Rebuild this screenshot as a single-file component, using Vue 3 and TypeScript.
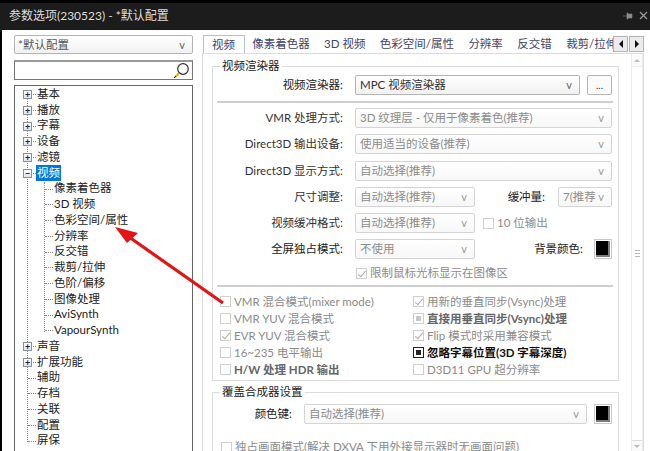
<script setup lang="ts">
interface TreeNode {
  label: string
  level: 1 | 2
  toggle?: '+' | '-'
  selected?: boolean
}

interface Option {
  label: string
  state?: 'checked' | 'mixed' | 'dark'
  bold?: boolean
}

const tree: TreeNode[] = [
  { label: '基本', level: 1, toggle: '+' },
  { label: '播放', level: 1, toggle: '+' },
  { label: '字幕', level: 1, toggle: '+' },
  { label: '设备', level: 1, toggle: '+' },
  { label: '滤镜', level: 1, toggle: '+' },
  { label: '视频', level: 1, toggle: '-', selected: true },
  { label: '像素着色器', level: 2 },
  { label: '3D 视频', level: 2 },
  { label: '色彩空间/属性', level: 2 },
  { label: '分辨率', level: 2 },
  { label: '反交错', level: 2 },
  { label: '裁剪/拉伸', level: 2 },
  { label: '色阶/偏移', level: 2 },
  { label: '图像处理', level: 2 },
  { label: 'AviSynth', level: 2 },
  { label: 'VapourSynth', level: 2 },
  { label: '声音', level: 1, toggle: '+' },
  { label: '扩展功能', level: 1, toggle: '+' },
  { label: '辅助', level: 1 },
  { label: '存档', level: 1 },
  { label: '关联', level: 1 },
  { label: '配置', level: 1 },
  { label: '屏保', level: 1 },
]

const tabs = ['视频', '像素着色器', '3D 视频', '色彩空间/属性', '分辨率', '反交错', '裁剪/拉伸']

const options: Option[] = [
  { label: 'VMR 混合模式(mixer mode)' },
  { label: '用新的垂直同步(Vsync)处理', state: 'checked' },
  { label: 'VMR YUV 混合模式' },
  { label: '直接用垂直同步(Vsync)处理', state: 'mixed', bold: true },
  { label: 'EVR YUV 混合模式', state: 'checked' },
  { label: 'Flip 模式时采用兼容模式', state: 'checked' },
  { label: '16~235 电平输出' },
  { label: '忽略字幕位置(3D 字幕深度)', state: 'dark', bold: true },
  { label: 'H/W 处理 HDR 输出', bold: true },
  { label: 'D3D11 GPU 超分辨率' },
]
</script>

<template>
  <div class="window">
    <header class="titlebar">
      <span class="title">参数选项(230523) - *默认配置</span>
      <svg class="title-icon" width="10" height="8" viewBox="0 0 10 8">
        <path d="M0 4h4M4 1h1v6H4zM5 2h4v4H5z" fill="#8a8a8a" stroke="#8a8a8a" stroke-width="0.6" />
      </svg>
      <svg class="title-icon close" width="9" height="9" viewBox="0 0 9 9">
        <path d="M1 1l7 7M8 1L1 8" stroke="#9a9a9a" stroke-width="1.3" fill="none" />
      </svg>
    </header>

    <div class="body">
      <aside class="sidebar">
        <div class="combo profile">
          <span class="combo-text">*默认配置</span>
          <span class="caret">v</span>
        </div>
        <div class="search">
          <svg width="17" height="17" viewBox="0 0 17 17">
            <path d="M2 15.5l4-4.5" stroke="#d8b820" stroke-width="2" fill="none" />
            <path d="M1 16l2-2" stroke="#222" stroke-width="1" fill="none" />
            <circle cx="10" cy="7" r="5.3" fill="#fff" stroke="#333" stroke-width="1.2" />
          </svg>
        </div>
        <div class="tree">
          <span class="trunk"></span>
          <span class="branch"></span>
          <div v-for="node in tree" :key="node.label" class="node" :class="'level-' + node.level">
            <span class="twig"></span>
            <span v-if="node.toggle" class="toggle">{{ node.toggle === '+' ? '+' : '−' }}</span>
            <span class="node-label" :class="{ selected: node.selected }">{{ node.label }}</span>
          </div>
        </div>
      </aside>

      <main class="main">
        <div class="tabbar">
          <div class="tabs">
            <span v-for="(tab, i) in tabs" :key="tab" class="tab" :class="{ active: i === 0 }">{{ tab }}</span>
          </div>
          <div class="tab-nav">
            <span class="nav-btn"><i class="tri left"></i></span>
            <span class="nav-btn"><i class="tri right"></i></span>
          </div>
        </div>

        <div class="pane">
          <div class="content">
            <fieldset class="group">
              <legend>视频渲染器</legend>
              <div class="row first">
                <label class="row-label strong">视频渲染器:</label>
                <div class="combo grow">
                  <span class="combo-text dark">MPC 视频渲染器</span>
                  <span class="caret">v</span>
                </div>
                <button class="more">...</button>
              </div>
              <div class="rule"></div>
              <div class="row after-rule">
                <label class="row-label">VMR 处理方式:</label>
                <div class="combo grow off">
                  <span class="combo-text">3D 纹理层 - 仅用于像素着色(推荐)</span>
                  <span class="caret">v</span>
                </div>
              </div>
              <div class="row">
                <label class="row-label">Direct3D 输出设备:</label>
                <div class="combo grow off">
                  <span class="combo-text">使用适当的设备(推荐)</span>
                  <span class="caret">v</span>
                </div>
              </div>
              <div class="row">
                <label class="row-label">Direct3D 显示方式:</label>
                <div class="combo grow off">
                  <span class="combo-text">自动选择(推荐)</span>
                  <span class="caret">v</span>
                </div>
              </div>
              <div class="row">
                <label class="row-label">尺寸调整:</label>
                <div class="combo half off">
                  <span class="combo-text">自动选择(推荐)</span>
                  <span class="caret">v</span>
                </div>
                <label class="side-label">缓冲量:</label>
                <div class="combo small off">
                  <span class="combo-text">7(推荐</span>
                  <span class="caret">v</span>
                </div>
              </div>
              <div class="row">
                <label class="row-label">视频缓冲格式:</label>
                <div class="combo half off">
                  <span class="combo-text">自动选择(推荐)</span>
                  <span class="caret">v</span>
                </div>
                <span class="check bit">
                  <i class="box"></i>
                  <span>10 位输出</span>
                </span>
              </div>
              <div class="row">
                <label class="row-label strong">全屏独占模式:</label>
                <div class="combo half off">
                  <span class="combo-text">不使用</span>
                  <span class="caret">v</span>
                </div>
                <label class="side-label strong">背景颜色:</label>
                <span class="swatch"></span>
              </div>
              <div class="limit">
                <span class="check">
                  <i class="box checked"></i>
                  <span>限制鼠标光标显示在图像区</span>
                </span>
              </div>
              <div class="rule second"></div>
              <div class="options">
                <span
                  v-for="opt in options"
                  :key="opt.label"
                  class="check"
                  :class="{ bold: opt.bold, darkText: opt.state === 'dark' }"
                >
                  <i class="box" :class="opt.state"></i>
                  <span>{{ opt.label }}</span>
                </span>
              </div>
            </fieldset>

            <fieldset class="group overlay">
              <legend>覆盖合成器设置</legend>
              <div class="row key-row">
                <label class="key-label">颜色键:</label>
                <div class="combo grow off">
                  <span class="combo-text">自动选择(推荐)</span>
                  <span class="caret">v</span>
                </div>
                <span class="swatch key-swatch"></span>
              </div>
              <span class="check exclusive">
                <i class="box"></i>
                <span>独占画面模式(解决 DXVA 下用外接显示器时无画面问题)</span>
              </span>
            </fieldset>
          </div>

          <div class="scrollbar">
            <span class="arrow up"></span>
            <span class="thumb"><i></i></span>
            <span class="arrow down"></span>
          </div>
        </div>
      </main>
    </div>

    <svg class="pointer" width="130" height="90" viewBox="0 0 130 90">
      <path d="M14 12L108 78" stroke="#e21414" stroke-width="3.2" fill="none" />
      <path d="M0 2L23 8L12 18Z" fill="#e21414" />
    </svg>
  </div>
</template>

<style scoped>
.window {
  position: relative;
  width: 650px;
  height: 451px;
  overflow: hidden;
  display: flex;
  flex-direction: column;
  background: #000;
  padding-top: 3px;
  box-sizing: border-box;
  font-family: Lato, "Noto Sans CJK SC", sans-serif;
  font-size: 11.5px;
  line-height: 16px;
  color: #222;
}

.titlebar {
  height: 27px;
  flex: none;
  display: flex;
  align-items: center;
  background: #1c1c1c;
  padding: 0 2px 2px 9px;
  box-sizing: border-box;
}

.title {
  flex: 1;
  color: #dcdcdc;
  font-size: 12px;
}

.title-icon {
  flex: none;
}

.title-icon.close {
  margin-left: 6px;
}

.body {
  flex: 1;
  min-height: 0;
  display: flex;
  background: #fff;
  margin-left: 2px;
}

.sidebar {
  width: 179px;
  margin-left: 12px;
  padding-top: 5px;
  flex: none;
  display: flex;
  flex-direction: column;
}

.combo {
  display: flex;
  align-items: center;
  height: 20px;
  box-sizing: border-box;
  border: 1px solid #b4b4b4;
  border-radius: 2px;
  background: linear-gradient(#ffffff, #f1f1f1);
  padding: 0 7px 0 4px;
}

.combo.profile {
  height: 19px;
  padding-left: 3px;
  color: #555;
}

.combo.off {
  border-color: #d4d4d4;
  background: linear-gradient(#ffffff, #f7f7f7);
  color: #8c8c8c;
}

.combo-text {
  flex: 1;
  min-width: 0;
  white-space: nowrap;
  overflow: hidden;
}

.combo-text.dark {
  color: #333;
}

.caret {
  flex: none;
  font-size: 11px;
  color: #666;
}

.off .caret {
  color: #999;
}

.search {
  height: 20px;
  margin-top: 6px;
  box-sizing: border-box;
  border: 1px solid #777;
  border-top: 2px solid #999;
  display: flex;
  justify-content: flex-end;
  align-items: center;
  padding-right: 2px;
}

.tree {
  position: relative;
  flex: 1;
  margin-top: 5px;
  box-sizing: border-box;
  border: 1px solid #666;
  border-bottom: none;
}

.trunk {
  position: absolute;
  left: 12px;
  top: 6px;
  height: 350px;
  border-left: 1px dotted #888;
}

.branch {
  position: absolute;
  left: 29px;
  top: 96px;
  height: 150px;
  border-left: 1px dotted #888;
}

.node {
  position: relative;
  height: 15.75px;
  display: flex;
  align-items: center;
  white-space: nowrap;
}

.level-1 {
  padding-left: 21px;
}

.level-2 {
  padding-left: 38px;
}

.twig {
  position: absolute;
  top: 8px;
  width: 8px;
  border-top: 1px dotted #888;
}

.level-1 .twig {
  left: 13px;
}

.level-2 .twig {
  left: 30px;
}

.toggle {
  position: absolute;
  left: 8px;
  top: 4px;
  width: 9px;
  height: 9px;
  box-sizing: border-box;
  border: 1px solid #8a8f9c;
  background: linear-gradient(#fff, #dfe3ea);
  color: #223;
  font-size: 9px;
  line-height: 7px;
  text-align: center;
  font-weight: 700;
}

.node-label {
  padding: 0 1px;
  color: #222;
}

.node-label.selected {
  background: #0078d7;
  color: #fff;
}

.main {
  flex: 1;
  min-width: 0;
  margin-left: 9px;
  margin-right: 6px;
  padding-top: 5px;
  display: flex;
  flex-direction: column;
}

.tabbar {
  display: flex;
  height: 18px;
  flex: none;
  position: relative;
  z-index: 1;
}

.tabs {
  flex: 1;
  min-width: 0;
  display: flex;
  overflow: hidden;
  padding-left: 1px;
}

.tab {
  flex: none;
  padding: 0 7.2px;
  height: 19px;
  line-height: 18px;
  color: #3f4468;
  white-space: nowrap;
}

.tab.active {
  box-sizing: border-box;
  width: 42px;
  padding: 0 0 0 8px;
  border: 1px solid #b8c0d0;
  border-bottom: none;
  background: #fff;
}

.tab-nav {
  flex: none;
  display: flex;
  gap: 1px;
  height: 16px;
  margin-top: 1px;
}

.nav-btn {
  width: 15px;
  height: 16px;
  box-sizing: border-box;
  border: 1px solid #b4b4b4;
  background: #ececec;
  display: flex;
  align-items: center;
  justify-content: center;
}

.tri {
  width: 0;
  height: 0;
  border-top: 4px solid transparent;
  border-bottom: 4px solid transparent;
}

.tri.left {
  border-right: 4px solid #111;
}

.tri.right {
  border-left: 4px solid #111;
}

.pane {
  flex: 1;
  min-height: 0;
  display: flex;
  border: 1px solid #dcdcdc;
  border-bottom: none;
  margin-right: 0;
}

.content {
  width: 417px;
  flex: none;
  padding: 4px 0 0 9px;
  box-sizing: content-box;
}

.group {
  margin: 0;
  min-width: 0;
  width: 407px;
  box-sizing: border-box;
  border: 1px solid #dcdcdc;
  padding: 0 6px 0 6px;
}

.group legend {
  margin-left: 1px;
  padding: 0 2px;
  color: #222;
  line-height: 16px;
}

.group.overlay {
  margin-top: 3px;
}

.row {
  display: flex;
  align-items: center;
  height: 20px;
  margin-top: 6.25px;
}

.row.first {
  margin-top: 1px;
}

.row.after-rule {
  margin-top: 5px;
}

.row-label {
  flex: none;
  width: 124px;
  margin-right: 12px;
  text-align: right;
  color: #333;
  white-space: nowrap;
}

.strong {
  color: #222;
}

.grow {
  flex: 1;
  min-width: 0;
}

.half {
  width: 120px;
  flex: none;
}

.small {
  width: 54px;
  flex: none;
  margin-left: 13px;
}

.side-label {
  margin-left: auto;
  white-space: nowrap;
  color: #222;
}

.side-label.strong {
  margin-right: 11px;
}

.more {
  width: 25px;
  height: 20px;
  margin-left: 7px;
  box-sizing: border-box;
  border: 1px solid #b4b4b4;
  border-radius: 2px;
  background: #fbfbfb;
  font: inherit;
  font-size: 10px;
  line-height: 12px;
  padding: 0;
  color: #333;
}

.rule {
  height: 2px;
  background: #cfcfcf;
  margin: 6px 0 0 -2px;
  width: 396px;
}

.swatch {
  flex: none;
  width: 18px;
  height: 20px;
  box-sizing: border-box;
  background: #000;
  border: 2px solid #fff;
  box-shadow: inset -1px -1px 0 1px #7c7c7c;
  outline: 1px solid #c8c8c8;
  outline-offset: -1px;
}

.check {
  display: flex;
  align-items: center;
  gap: 3px;
  color: #8a8a8a;
  white-space: nowrap;
  min-width: 0;
}

.check.bold {
  font-weight: 700;
  color: #666;
}

.check.darkText {
  color: #111;
}

.box {
  position: relative;
  flex: none;
  width: 11px;
  height: 11px;
  box-sizing: border-box;
  border: 1px solid #cfcfcf;
  background: #fff;
}

.box.checked::after {
  content: "";
  position: absolute;
  left: 3px;
  top: 0;
  width: 3px;
  height: 7px;
  border: solid #aaa;
  border-width: 0 1px 1px 0;
  transform: rotate(40deg);
}

.box.mixed::after,
.box.dark::after {
  content: "";
  position: absolute;
  left: 2px;
  top: 2px;
  width: 5px;
  height: 5px;
  background: #c8c8c8;
}

.box.dark {
  border-color: #222;
}

.box.dark::after {
  background: #222;
}

.bit {
  margin-left: 8px;
}

.limit {
  display: flex;
  height: 16px;
  align-items: center;
  margin: 6px 0 0 137px;
}

.rule.second {
  margin-top: 4px;
}

.options {
  display: grid;
  grid-template-columns: 193px 1fr;
  grid-auto-rows: 17px;
  align-items: center;
  padding: 6px 0 2px 1px;
}

.key-row {
  margin-top: 4px;
}

.key-label {
  flex: none;
  width: 73px;
  margin-right: 12px;
  text-align: right;
  white-space: nowrap;
}

.key-swatch {
  margin-left: 7px;
}

.exclusive {
  margin: 15px 0 0 2px;
}

.scrollbar {
  flex: none;
  width: 10px;
  margin-left: 2px;
  display: flex;
  flex-direction: column;
  background: #fafafa;
  border-left: 1px solid #ececec;
  border-right: 1px solid #ececec;
  box-sizing: content-box;
}

.arrow {
  height: 9px;
  flex: none;
  display: flex;
  align-items: center;
  justify-content: center;
}

.arrow::after {
  content: "";
  border-left: 3px solid transparent;
  border-right: 3px solid transparent;
}

.arrow.up {
  margin-top: 2px;
}

.arrow.up::after {
  border-bottom: 3px solid #bbb;
}

.arrow.down::after {
  border-top: 3px solid #bbb;
}

.thumb {
  flex: 1;
  margin: 1px 0;
  background: #fff;
  border-top: 1px solid #eee;
  border-bottom: 1px solid #ddd;
  display: flex;
  align-items: center;
  justify-content: center;
}

.thumb i {
  width: 5px;
  height: 5px;
  border-top: 1px solid #bbb;
  border-bottom: 1px solid #bbb;
  background: linear-gradient(#bbb, #bbb) center / 100% 1px no-repeat;
}

.pointer {
  position: absolute;
  left: 115px;
  top: 225px;
}
</style>

<style>
html,
body {
  margin: 0;
  background: #000;
}
</style>
